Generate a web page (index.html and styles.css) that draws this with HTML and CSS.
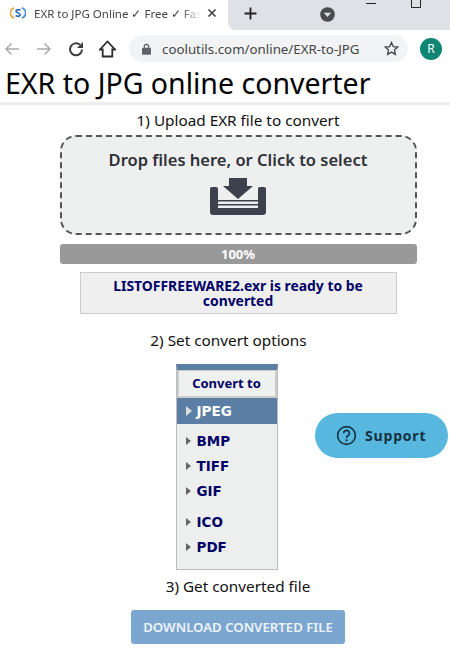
FILE: index.html
```html
<!DOCTYPE html>
<html lang="en">
  <head>
    <meta charset="UTF-8" />
    <meta name="viewport" content="width=device-width, initial-scale=1.0" />
    <title>EXR to JPG online converter</title>
    <link rel="stylesheet" href="styles.css">
  </head>
  <body>
    <!-- Browser tab strip -->
    <div class="tabstrip">
      <div class="tab">
        <svg class="favicon" width="16" height="14" viewBox="0 0 16 14">
          <ellipse cx="8" cy="7" rx="7" ry="5.500" fill="#eef5fb" />
          <path d="M4 1.800 A7.500 6 0 0 0 4 12.200" fill="none" stroke="#e8a33c" stroke-width="1.800" />
          <path d="M12 1.800 A7.500 6 0 0 1 12 12.200" fill="none" stroke="#3f8fd6" stroke-width="1.800" />
          <path d="M10.500 4.200 C9 3.200 6 3.600 6 5.200 C6 7 10.200 6.800 10.200 8.700 C10.200 10.300 7.500 10.700 5.700 9.700" fill="none" stroke="#1f5fa8" stroke-width="1.500" />
        </svg>
        <span class="tab-title">EXR to JPG Online ✓ Free ✓ Fast</span>
        <svg class="tab-close" width="10" height="10" viewBox="0 0 10 10">
          <path d="M1.500 1.500 L8.500 8.500 M8.500 1.500 L1.500 8.500" stroke="#444" stroke-width="1.700" />
        </svg>
      </div>
      <div class="tab-rest">
        <svg class="new-tab" width="13" height="13" viewBox="0 0 13 13">
          <path d="M6.500 0.500 V12.500 M0.500 6.500 H12.500" stroke="#222" stroke-width="1.800" />
        </svg>
        <svg class="media-icon" width="15" height="15" viewBox="0 0 15 15">
          <circle cx="7.500" cy="7.500" r="7.300" fill="#4a4b4e" />
          <path d="M3.800 5.800 H11.200 L7.500 10 Z" fill="#dee1e6" />
        </svg>
        <svg class="win-min" width="10" height="2" viewBox="0 0 10 2">
          <rect width="10" height="1" fill="#222" />
        </svg>
        <svg class="win-max" width="10" height="8" viewBox="0 0 10 8">
          <path d="M0.500 0 V7.500 H9.500 V0" fill="none" stroke="#222" />
        </svg>
      </div>
    </div>

    <!-- Address bar -->
    <div class="toolbar">
      <svg class="tool" width="16" height="14" viewBox="0 0 16 14">
        <path d="M15 7 H2 M7.500 1.500 L2 7 L7.500 12.500" fill="none" stroke="#a9abae" stroke-width="1.500" />
      </svg>
      <svg class="tool" width="16" height="14" viewBox="0 0 16 14">
        <path d="M1 7 H14 M8.500 1.500 L14 7 L8.500 12.500" fill="none" stroke="#a9abae" stroke-width="1.500" />
      </svg>
      <svg class="tool" width="16" height="16" viewBox="0 0 16 16">
        <path d="M14 8.500 A6 6 0 1 1 12 3.800" fill="none" stroke="#3c3c3c" stroke-width="2" />
        <path d="M15 1 V7 H9 Z" fill="#3c3c3c" />
      </svg>
      <svg class="tool tool-home" width="17" height="18" viewBox="0 0 17 18">
        <path d="M8.500 1.500 L16 9.500 H13.300 V16.500 H3.700 V9.500 H1 Z" fill="none" stroke="#2c2c2c" stroke-width="1.800" />
      </svg>
      <div class="omnibox">
        <svg width="9" height="12" viewBox="0 0 9 12">
          <path d="M2.300 5 V3.500 A2.200 2.200 0 0 1 6.700 3.500 V5" fill="none" stroke="#5f6368" stroke-width="1.200" />
          <rect y="4.800" width="9" height="7" rx="1" fill="#5f6368" />
        </svg>
        <span class="url">coolutils.com/online/EXR-to-JPG</span>
        <svg width="15" height="15" viewBox="0 0 15 15">
          <path d="M7.500 1.500 L9.300 5.600 L13.700 6 L10.400 9 L11.400 13.400 L7.500 11.100 L3.600 13.400 L4.600 9 L1.300 6 L5.700 5.600 Z" fill="none" stroke="#444" stroke-width="1.300" />
        </svg>
      </div>
      <div class="avatar">R</div>
    </div>

    <h1>EXR to JPG online converter</h1>

    <div class="content">
      <p class="step step-first">1) Upload EXR file to convert</p>

      <div class="dropzone">
        <div class="drop-text">Drop files here, or Click to select</div>
        <svg width="56" height="37" viewBox="0 0 56 37">
          <path d="M0 11 Q0 9 2 9 H6 Q8 9 8 11 V30 H48 V11 Q48 9 50 9 H54 Q56 9 56 11 V34 Q56 37 53 37 H3 Q0 37 0 34 Z" fill="#3d414d" />
          <path d="M19 0 H37 V8 H43 L28 21 L13 8 H19 Z" fill="#3d414d" />
          <rect x="8" y="22" width="40" height="1.500" fill="#3d414d" />
          <rect x="8" y="26" width="40" height="1.500" fill="#3d414d" />
        </svg>
      </div>

      <div class="progress">100%</div>

      <div class="ready">LISTOFFREEWARE2.exr is ready to be converted</div>

      <p class="step step-options">2) Set convert options</p>

      <div class="convert-menu">
        <div class="menu-head">Convert to</div>
        <div class="menu-item selected"><span class="arrow"></span>JPEG</div>
        <ul class="menu-group">
          <li class="menu-item"><span class="arrow"></span>BMP</li>
          <li class="menu-item"><span class="arrow"></span>TIFF</li>
          <li class="menu-item"><span class="arrow"></span>GIF</li>
        </ul>
        <ul class="menu-group">
          <li class="menu-item"><span class="arrow"></span>ICO</li>
          <li class="menu-item"><span class="arrow"></span>PDF</li>
        </ul>
      </div>

      <p class="step step-get">3) Get converted file</p>

      <a class="download" href="#">DOWNLOAD CONVERTED FILE</a>
    </div>

    <!-- Floating help button -->
    <div class="support">
      <svg width="21" height="21" viewBox="0 0 22 22">
        <circle cx="11" cy="11" r="9.300" fill="none" stroke="#14303f" stroke-width="1.700" />
        <path d="M8 8.700 A3 3 0 1 1 12.500 11.300 C11.400 12 11 12.300 11 13.500" fill="none" stroke="#14303f" stroke-width="1.700" />
        <rect x="10" y="15" width="2" height="2" fill="#14303f" />
      </svg>
      <span>Support</span>
    </div>
  </body>
</html>
```

FILE: styles.css
```css
* {
  margin: 0;
  padding: 0;
  box-sizing: border-box;
}

body {
  font-family: "Noto Sans", "Open Sans", Arial, sans-serif;
  background-color: #fff;
  color: #000;
  position: relative;
  height: 669px;
  overflow: hidden;
}

/* Browser chrome */
.tabstrip {
  display: flex;
  height: 30px;
  background-color: #fff;
}

.tab {
  width: 228px;
  display: flex;
  align-items: center;
  padding: 0 6px 4px 10px;
}

.favicon {
  flex: none;
}

.tab-title {
  flex: 1;
  margin-left: 8px;
  font-size: 11.500px;
  color: #444;
  white-space: nowrap;
  overflow: hidden;
  -webkit-mask-image: linear-gradient(to right, #000 88%, transparent);
  mask-image: linear-gradient(to right, #000 88%, transparent);
}

.tab-close {
  flex: none;
  margin: 0 5px 0 6px;
}

.tab-rest {
  flex: 1;
  background-color: #dee1e6;
  border-bottom-left-radius: 8px;
  display: flex;
  align-items: flex-start;
  padding-left: 16px;
}

.new-tab {
  margin-top: 7px;
}

.media-icon {
  margin: 7px 0 0 63px;
}

.win-min {
  margin: 3px 0 0 31px;
}

.win-max {
  margin: 0 0 0 35px;
}

.toolbar {
  height: 37px;
  display: flex;
  align-items: center;
  padding: 0 8px 0 4px;
}

.tool {
  flex: none;
  margin-right: 16px;
}

.tool-home {
  margin-left: -1px;
}

.omnibox {
  width: 279px;
  height: 27px;
  margin-left: -3px;
  background-color: #f1f3f4;
  border-radius: 14px;
  display: flex;
  align-items: center;
  padding: 0 9px 0 13px;
}

.url {
  flex: 1;
  margin-left: 11px;
  font-size: 13.300px;
  color: #444;
  white-space: nowrap;
}

.avatar {
  width: 22px;
  height: 22px;
  margin-left: auto;
  border-radius: 50%;
  background-color: #0f8574;
  color: #fff;
  font-size: 12px;
  line-height: 22px;
  text-align: center;
}

/* Page */
h1 {
  height: 38px;
  padding-left: 5px;
  border-bottom: 3px solid #eee;
  font-size: 28.500px;
  font-weight: normal;
  line-height: 33px;
  white-space: nowrap;
}

.content {
  display: flex;
  flex-direction: column;
  align-items: center;
  padding-left: 26px;
}

.step {
  font-size: 15.300px;
  line-height: 20px;
  color: #111;
}

.step-first {
  margin-top: 5px;
}

.step-options {
  margin: 16px 19px 0 0;
}

.step-get {
  margin-top: 6px;
}

.dropzone {
  width: 357px;
  height: 100px;
  margin-top: 5px;
  background-color: #eeefef;
  border: 2px dashed #555;
  border-radius: 16px;
  display: flex;
  flex-direction: column;
  align-items: center;
  padding-top: 13px;
}

.drop-text {
  margin-bottom: 8px;
  font-size: 16.500px;
  font-weight: 600;
  line-height: 20px;
  color: #2e3038;
}

.progress {
  width: 357px;
  height: 20px;
  margin-top: 9px;
  background-color: #999;
  border-radius: 3px;
  color: #fff;
  font-size: 13px;
  font-weight: bold;
  line-height: 20px;
  text-align: center;
}

.ready {
  width: 317px;
  height: 42px;
  margin-top: 8px;
  padding: 5px 30px 0;
  background-color: #efefef;
  border: 1px solid #ccc;
  color: #000066;
  font-size: 13.900px;
  font-weight: bold;
  line-height: 15px;
  text-align: center;
}

.convert-menu {
  width: 102px;
  height: 206px;
  margin: 14px 23px 0 0;
  background-color: #edefef;
  border: 1px solid #bbb;
  border-top: 6px solid #5b7fa4;
}

.menu-head {
  height: 28px;
  background-color: #eff0f0;
  border: 2px solid #ccc;
  border-top-width: 1px;
  color: #000066;
  font-size: 13px;
  font-weight: bold;
  line-height: 25px;
  text-align: center;
}

.menu-group {
  list-style: none;
}

.menu-group:first-of-type {
  margin-top: 4px;
}

.menu-group + .menu-group {
  margin-top: 6px;
}

.menu-item {
  height: 25px;
  display: flex;
  align-items: center;
  padding-left: 9px;
  color: #000066;
  font-family: "DejaVu Sans", sans-serif;
  font-size: 13.500px;
  font-weight: bold;
}

.menu-item.selected {
  height: 26px;
  background-color: #5b7fa4;
  color: #fff;
}

.arrow {
  width: 0;
  height: 0;
  margin-right: 6px;
  border-left: 5px solid #666;
  border-top: 4px solid transparent;
  border-bottom: 4px solid transparent;
}

.selected .arrow {
  margin-right: 5px;
  border-left: 6px solid #ddd;
  border-top-width: 5px;
  border-bottom-width: 5px;
}

.download {
  width: 214px;
  height: 34px;
  margin-top: 14px;
  background-color: #7ba6cf;
  border-radius: 3px;
  color: #eef3f8;
  font-size: 13.200px;
  font-weight: 600;
  line-height: 34px;
  text-align: center;
  text-decoration: none;
  white-space: nowrap;
}

/* Sits over the page content */
.support {
  position: absolute;
  left: 315px;
  top: 413px;
  width: 133px;
  height: 45px;
  background-color: #57b7de;
  border-radius: 23px;
  display: flex;
  align-items: center;
  gap: 8px;
  padding-left: 21px;
  color: #14303f;
  font-family: "Open Sans", sans-serif;
  font-size: 14px;
  font-weight: 700;
  letter-spacing: 0.8px;
}
```
